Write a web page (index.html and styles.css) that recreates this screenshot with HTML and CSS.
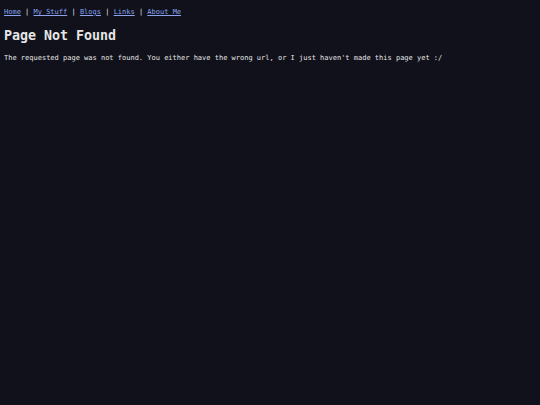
FILE: index.html
```html
<!DOCTYPE html>
<html>
<head>
<meta charset="utf-8">
<link rel="stylesheet" href="styles.css">
</head>
<body>
<nav class="nav"><a href="#">Home</a> | <a href="#">My Stuff</a> | <a href="#">Blogs</a> | <a href="#">Links</a> | <a href="#">About Me</a></nav>
<h1 class="title">Page Not Found</h1>
<p class="msg">The requested page was not found. You either have the wrong url, or I just haven't made this page yet :/</p>
</body>
</html>
```
FILE: styles.css
```css
html { background: #10111a; }
body {
  margin: 4px;
  background: #10111a;
  color: #e6e6e6;
  font-family: "DejaVu Sans Mono", monospace;
  font-size: 7px;
  line-height: 1.2;
}
.nav { margin-top: 4px; }
.nav a { color: #8aa4f0; }
.title { font-size: 13.3px; margin: 12px 0 10px; font-weight: bold; }
.msg { margin: 0; }
```
